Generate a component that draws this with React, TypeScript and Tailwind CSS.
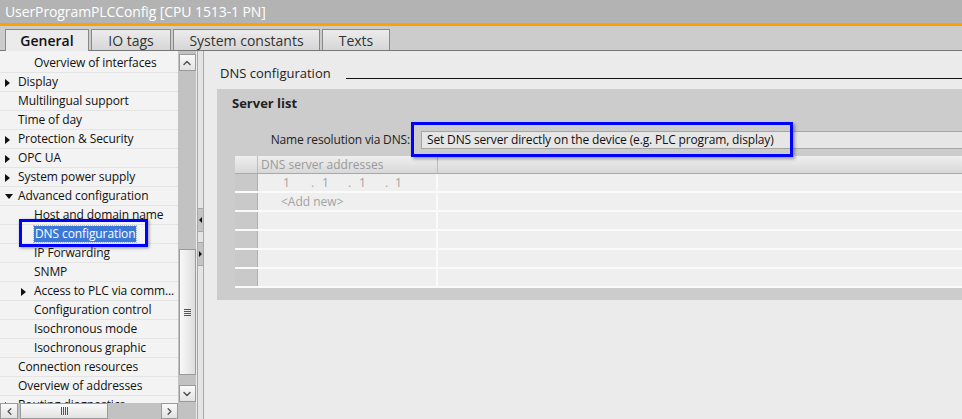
import { ChevronDown, ChevronLeft, ChevronRight, ChevronUp } from 'lucide-react';

type TreeItem = {
  text: string;
  level: 1 | 2;
  arrow?: 'right' | 'down';
  selected?: boolean;
};

const treeItems: TreeItem[] = [
  { text: 'Overview of interfaces', level: 2 },
  { text: 'Display', level: 1, arrow: 'right' },
  { text: 'Multilingual support', level: 1 },
  { text: 'Time of day', level: 1 },
  { text: 'Protection & Security', level: 1, arrow: 'right' },
  { text: 'OPC UA', level: 1, arrow: 'right' },
  { text: 'System power supply', level: 1, arrow: 'right' },
  { text: 'Advanced configuration', level: 1, arrow: 'down' },
  { text: 'Host and domain name', level: 2 },
  { text: 'DNS configuration', level: 2, selected: true },
  { text: 'IP Forwarding', level: 2 },
  { text: 'SNMP', level: 2 },
  { text: 'Access to PLC via comm...', level: 2, arrow: 'right' },
  { text: 'Configuration control', level: 2 },
  { text: 'Isochronous mode', level: 2 },
  { text: 'Isochronous graphic', level: 2 },
  { text: 'Connection resources', level: 1 },
  { text: 'Overview of addresses', level: 1 },
  { text: 'Routing diagnostics', level: 1, arrow: 'right' },
];

const tabs = ['General', 'IO tags', 'System constants', 'Texts'];
const tabWidths = [84, 80, 147, 68];

const TriRight = () => (
  <svg width="5" height="8" viewBox="0 0 5 8" className="shrink-0">
    <path d="M0 0 L5 4 L0 8 Z" fill="#111" />
  </svg>
);

const TriDown = () => (
  <svg width="8" height="5" viewBox="0 0 8 5" className="shrink-0">
    <path d="M0 0 L8 0 L4 5 Z" fill="#111" />
  </svg>
);

const TreeRow = ({ item }: { item: TreeItem }) => {
  const textLeft = item.level === 1 ? 'pl-[18px]' : 'pl-[34px]';
  const arrowLeft = item.level === 1 ? 'left-[5px]' : 'left-[21px]';
  return (
    <div className={`relative h-[19px] shrink-0 flex items-center border-b border-[#e4e4e4] ${textLeft}`}>
      {item.arrow && (
        <div className={`absolute top-0 h-[19px] flex items-center ${arrowLeft}`}>
          {item.arrow === 'right' ? <TriRight /> : <TriDown />}
        </div>
      )}
      {item.selected ? (
        <span className="bg-[#3b78d6] text-white px-[1px] leading-[16px] outline-1 outline-dotted outline-[#9bb8e8]">
          {item.text}
        </span>
      ) : (
        <span className="whitespace-nowrap">{item.text}</span>
      )}
      {item.selected && (
        <div className="absolute left-[19px] top-[-6px] w-[129px] h-[28px] border-[3px] border-[#0000ff] shadow-[1px_1px_3px_rgba(0,0,0,0.4)]" />
      )}
    </div>
  );
};

const ScrollButton = ({ children }: { children: React.ReactNode }) => (
  <div className="w-[17px] h-[17px] shrink-0 flex items-center justify-center border border-[#9a9a9a] bg-gradient-to-b from-[#fafafa] to-[#e2e2e2] text-[#555]">
    {children}
  </div>
);

const App = () => {
  return (
    <div
      className="w-[962px] h-[419px] overflow-hidden flex flex-col bg-[#ebebeb] text-[#111]"
      style={{ fontFamily: '"Open Sans", "Noto Sans", sans-serif' }}
    >
      {/* Title bar */}
      <div className="h-[23px] shrink-0 bg-[#b3b3b3] text-white text-[14px] leading-[23px] pl-[5px] tracking-[-0.1px]">
        UserProgramPLCConfig [CPU 1513-1 PN]
      </div>
      <div className="h-[3px] shrink-0 bg-[#ff9f00]" />

      {/* Tabs */}
      <div className="h-[25px] shrink-0 bg-[#cccccc] border-b border-[#777] flex items-end pl-[5px] gap-[2px]">
        {tabs.map((tab, i) => (
          <div
            key={tab}
            className={
              i === 0
                ? 'h-[22px] mb-[-1px] flex items-center justify-center border border-b-0 border-[#888] bg-[#ebebeb] text-[14px] font-semibold text-[#111]'
                : 'h-[21px] flex items-center justify-center border border-b-0 border-[#888] bg-gradient-to-b from-[#ececec] to-[#d6d6d6] text-[14px] text-[#333]'
            }
            style={{ width: tabWidths[i] }}
          >
            {tab}
          </div>
        ))}
      </div>

      <div className="flex flex-1 min-h-0">
        {/* Left tree area */}
        <div className="w-[178px] flex flex-col shrink-0">
          <div className="flex-1 min-h-0 overflow-hidden bg-[#f3f3f3] text-[12px] tracking-[-0.1px] pt-[3px] flex flex-col">
            {treeItems.map((item) => (
              <TreeRow key={item.text} item={item} />
            ))}
          </div>
          {/* Horizontal scrollbar */}
          <div className="h-[16px] shrink-0 bg-[#c2c2c2] flex items-center">
            <div className="w-[18px] h-[16px] flex items-center justify-center border border-[#9a9a9a] bg-gradient-to-b from-[#fafafa] to-[#e2e2e2] text-[#555]">
              <ChevronLeft size={11} strokeWidth={3} />
            </div>
            <div className="ml-[2px] w-[88px] h-[16px] flex items-center justify-center border border-[#9a9a9a] bg-gradient-to-b from-[#fafafa] to-[#e2e2e2]">
              <div className="flex gap-[1px]">
                <div className="w-[1px] h-[8px] bg-[#555]" />
                <div className="w-[1px] h-[8px] bg-[#555]" />
                <div className="w-[1px] h-[8px] bg-[#555]" />
                <div className="w-[1px] h-[8px] bg-[#555]" />
              </div>
            </div>
            <div className="flex-1" />
            <div className="w-[17px] h-[16px] flex items-center justify-center border border-[#9a9a9a] bg-gradient-to-b from-[#fafafa] to-[#e2e2e2] text-[#555]">
              <ChevronRight size={11} strokeWidth={3} />
            </div>
          </div>
        </div>

        {/* Vertical scrollbar */}
        <div className="w-[18px] shrink-0 bg-[#c2c2c2] flex flex-col items-center pt-[3px]">
          <ScrollButton>
            <ChevronUp size={12} strokeWidth={3} />
          </ScrollButton>
          <div className="h-[178px] shrink-0" />
          <div className="w-[17px] h-[126px] shrink-0 flex items-center justify-center border border-[#9a9a9a] bg-gradient-to-r from-[#f8f8f8] to-[#dedede]">
            <div className="flex flex-col gap-[1px]">
              <div className="w-[7px] h-[1px] bg-[#555]" />
              <div className="w-[7px] h-[1px] bg-[#555]" />
              <div className="w-[7px] h-[1px] bg-[#555]" />
              <div className="w-[7px] h-[1px] bg-[#555]" />
            </div>
          </div>
          <div className="h-[10px] shrink-0" />
          <ScrollButton>
            <ChevronDown size={12} strokeWidth={3} />
          </ScrollButton>
        </div>

        {/* Splitter */}
        <div className="w-[9px] shrink-0 flex">
          <div className="w-[1px] bg-[#ebebeb]" />
          <div className="w-[7px] bg-[#e4e4e4] border-x border-[#a8a8a8] flex flex-col pt-[157px]">
            <div className="h-[24px] bg-[#c4c4c4] border-y border-[#a8a8a8] flex items-center justify-center">
              <svg width="3" height="6" viewBox="0 0 3 6">
                <path d="M3 0 L0 3 L3 6 Z" fill="#111" />
              </svg>
            </div>
            <div className="h-[10px]" />
            <div className="h-[24px] bg-[#c4c4c4] border-y border-[#a8a8a8] flex items-center justify-center">
              <svg width="3" height="6" viewBox="0 0 3 6">
                <path d="M0 0 L3 3 L0 6 Z" fill="#111" />
              </svg>
            </div>
          </div>
          <div className="w-[1px] bg-[#ebebeb]" />
        </div>

        {/* Content */}
        <div className="flex-1 min-w-0 flex flex-col pl-[12px] pt-[14px]">
          <div className="flex items-center h-[18px] pl-[3px]">
            <span className="text-[13px] text-[#222] whitespace-nowrap">DNS configuration</span>
            <div className="flex-1 h-[1px] bg-[#111] ml-[15px] mt-[9px]" />
          </div>

          <div className="mt-[6px] h-[211px] bg-[#cccccc] flex flex-col">
            <div className="pl-[15px] pt-[5px] h-[24px] text-[13px] font-bold text-[#222]">Server list</div>

            <div className="relative mt-[18px] flex items-center h-[18px]">
              <div className="w-[193px] text-right text-[12px] tracking-[-0.15px] text-[#222] whitespace-nowrap">
                Name resolution via DNS:
              </div>
              <div className="ml-[11px] flex-1 h-[18px] border border-[#a5a5a5] border-r-0 bg-[#e6e6e6] text-[12px] tracking-[-0.15px] leading-[16px] pl-[5px] text-[#111] whitespace-nowrap">
                Set DNS server directly on the device (e.g. PLC program, display)
              </div>
              <div className="absolute left-[194px] top-[-9px] w-[382px] h-[35px] border-[3px] border-[#0000ff] shadow-[2px_2px_3px_rgba(0,0,0,0.35)]" />
            </div>

            {/* Table */}
            <div className="mt-[7px] ml-[18px] flex flex-col">
              <div className="flex h-[18px] border-b border-[#a9a9a9] bg-gradient-to-b from-[#efefef] to-[#d8d8d8]">
                <div className="w-[23px] border-r border-[#bdbdbd]" />
                <div className="w-[180px] border-r border-[#bdbdbd] pl-[3px] text-[12px] leading-[17px] text-[#9a9a9a] whitespace-nowrap">
                  DNS server addresses
                </div>
                <div className="flex-1" />
              </div>
              {[0, 1, 2, 3, 4, 5].map((r) => (
                <div key={r} className="flex h-[19px] border-b-2 border-[#fafafa]">
                  <div className="w-[23px] bg-[#c9c9c9] border-r border-[#b0b0b0]" />
                  <div className="w-[180px] bg-[#efefef] border-r-2 border-[#fafafa] text-[12px] leading-[17px] text-[#a3a3a3] flex items-center">
                    {r === 0 && (
                      <div className="flex pl-[25px]">
                        <span className="w-[28px]">1</span>
                        <span className="w-[11px]">.</span>
                        <span className="w-[26px]">1</span>
                        <span className="w-[11px]">.</span>
                        <span className="w-[26px]">1</span>
                        <span className="w-[10px]">.</span>
                        <span>1</span>
                      </div>
                    )}
                    {r === 1 && <span className="pl-[23px]">&lt;Add new&gt;</span>}
                  </div>
                  <div className="flex-1 bg-[#efefef]" />
                </div>
              ))}
            </div>
          </div>
        </div>
      </div>
    </div>
  );
};

export default App;
